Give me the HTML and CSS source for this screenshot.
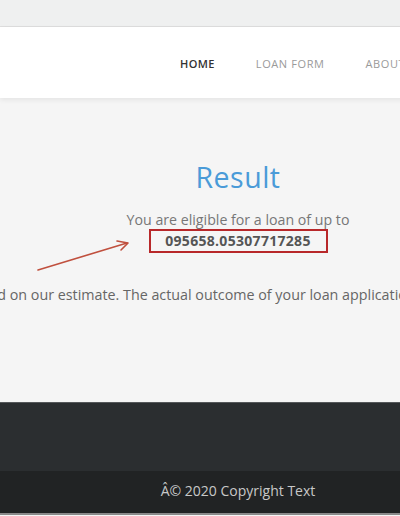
FILE: index.html
```html
<!DOCTYPE html>
<html>
<head>
<meta charset="utf-8">
<link rel="stylesheet" href="styles.css">
</head>
<body>
<div class="page">
  <div class="topbar"></div>
  <header class="nav">
    <ul class="menu">
      <li class="active">HOME</li>
      <li>LOAN FORM</li>
      <li>ABOUT</li>
    </ul>
  </header>
  <main class="main">
    <h1 class="title">Result</h1>
    <p class="lead">You are eligible for a loan of up to</p>
    <div class="amount-row">
      <svg class="arrow" width="100" height="36" viewBox="0 0 100 36">
        <line x1="3" y1="33" x2="92" y2="6" stroke="#c0503e" stroke-width="1.6" stroke-linecap="round"/>
        <path d="M82 4 L93 6 L86 13" fill="none" stroke="#c0503e" stroke-width="1.6" stroke-linecap="round" stroke-linejoin="round"/>
      </svg>
      <span class="amount">095658.05307717285</span>
    </div>
    <div class="note-row"><p class="note">This result is based on our estimate. The actual outcome of your loan application may differ from this result.</p></div>
  </main>
  <footer class="footer">
    <div class="footer-top"></div>
    <div class="footer-bottom">Â© 2020 Copyright Text</div>
  </footer>
</div>
</body>
</html>
```

FILE: styles.css
```css
html, body {
  margin: 0;
  padding: 0;
  overflow: hidden;
  background: #f5f5f5;
}
.page {
  width: 476px;
  font-family: "Open Sans", "DejaVu Sans", sans-serif;
}
.topbar {
  height: 26px;
  background: #eff0f0;
  border-bottom: 1px solid #dedede;
}
.nav {
  height: 71px;
  background: #fff;
  box-shadow: 0 2px 5px rgba(0,0,0,0.07);
  position: relative;
  z-index: 1;
  display: flex;
  align-items: center;
  padding-top: 2px;
  box-sizing: border-box;
}
.menu {
  list-style: none;
  margin: 0;
  padding: 0 0 0 180px;
  display: flex;
  gap: 41px;
  font-size: 11px;
  letter-spacing: 0.6px;
  color: #9a9a9a;
}
.menu .active {
  color: #333;
  font-weight: 600;
  letter-spacing: 0.4px;
}
.main {
  height: 304px;
  background: #f5f5f5;
  display: flex;
  flex-direction: column;
  align-items: center;
  box-sizing: border-box;
  padding-top: 59px;
}
.title {
  margin: 0;
  font-weight: 400;
  font-size: 28.5px;
  line-height: 40px;
  color: #4a9bd8;
  letter-spacing: 0.5px;
}
.lead {
  margin: 0;
  margin-top: 14px;
  font-size: 14.2px;
  line-height: 18px;
  color: #777;
}
.amount-row {
  position: relative;
  display: flex;
  justify-content: center;
}
.amount {
  display: inline-block;
  width: 175px;
  text-align: center;
  border: 2px solid #b8282a;
  font-weight: 700;
  font-size: 14px;
  line-height: 20px;
  color: #555;
  letter-spacing: 0.3px;
}
.arrow {
  position: absolute;
  left: -114px;
  top: 8px;
}
.note-row {
  width: 476px;
  display: flex;
  justify-content: center;
  margin-top: 32px;
}
.note {
  margin: 0;
  white-space: nowrap;
  font-size: 14.3px;
  line-height: 20px;
  color: #666;
  flex-shrink: 0;
}
.footer-top {
  height: 68px;
  background: #2b2e30;
  border-top: 1px solid #55585a;
}
.footer-bottom {
  height: 44px;
  background: #212324;
  color: #c8c8c8;
  font-size: 14px;
  display: flex;
  align-items: center;
  justify-content: center;
  padding-bottom: 3px;
  box-sizing: border-box;
  border-bottom: 2px solid #8a8a8a;
}
```
